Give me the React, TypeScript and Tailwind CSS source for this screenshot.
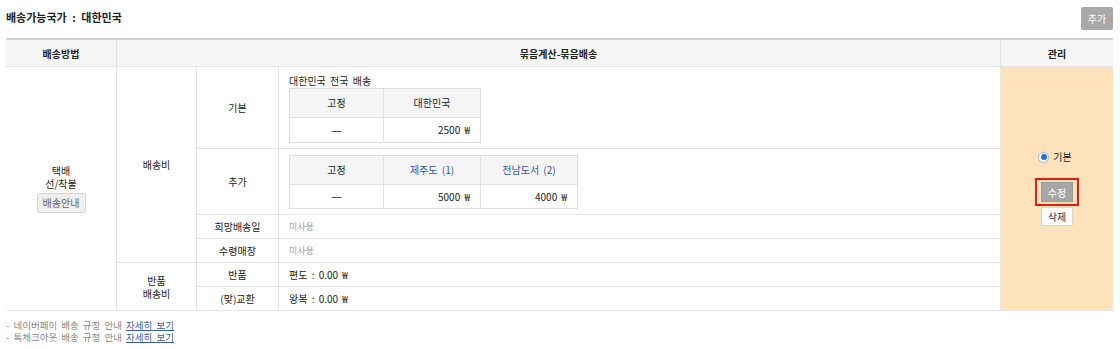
export default function App() {
  const cell = "border-r border-b border-[#e5e5e5] flex items-center justify-center";
  return (
    <div className="w-[1120px] h-[349px] bg-white font-['Noto_Sans_CJK_KR','Liberation_Sans',sans-serif] text-[10px] text-[#333] pl-[6px] pr-[7px] [word-spacing:2px]">
      <div className="h-[38px] flex items-start justify-between">
        <div className="mt-[9px] text-[11px] font-bold text-[#222] leading-[16px] [word-spacing:3px]">배송가능국가 : 대한민국</div>
        <button className="mt-[7px] w-[32px] h-[23px] bg-[#a9a9a9] text-white text-[10px] rounded-[2px]">추가</button>
      </div>

      <div className="grid grid-cols-[111px_80px_82px_722px_112px] grid-rows-[27px_82px_66px_24px_24px_24px_24px] border-t-2 border-[#d2d2d2]">
        {/* header */}
        <div className={`${cell} bg-[#f6f6f6] font-bold text-[#222]`}>배송방법</div>
        <div className={`${cell} col-span-3 bg-[#f6f6f6] font-bold text-[#222]`}>묶음계산-묶음배송</div>
        <div className="border-b border-[#e5e5e5] flex items-center justify-center bg-[#f6f6f6] font-bold text-[#222]">관리</div>

        {/* col1 */}
        <div className={`${cell} flex-col`} style={{ gridColumn: 1, gridRow: "2 / span 6" }}>
          <div className="leading-[12px] text-[#222]">택배</div>
          <div className="leading-[13px] text-[#222]">선/착불</div>
          <button className="mt-[3px] w-[49px] h-[20px] bg-[#efefef] border border-[#d6d6d6] rounded-[2px] text-[#666] text-[10px]">배송안내</button>
        </div>

        {/* col2 */}
        <div className={`${cell} text-[#222]`} style={{ gridColumn: 2, gridRow: "2 / span 4" }}>배송비</div>
        <div className={`${cell} flex-col leading-[13px] text-[#222]`} style={{ gridColumn: 2, gridRow: "6 / span 2" }}>
          <div>반품</div>
          <div>배송비</div>
        </div>

        {/* col3 labels */}
        <div className={`${cell} text-[#222]`} style={{ gridColumn: 3, gridRow: 2 }}>기본</div>
        <div className={`${cell} text-[#222]`} style={{ gridColumn: 3, gridRow: 3 }}>추가</div>
        <div className={`${cell} text-[#222]`} style={{ gridColumn: 3, gridRow: 4 }}>희망배송일</div>
        <div className={`${cell} text-[#222]`} style={{ gridColumn: 3, gridRow: 5 }}>수령매장</div>
        <div className={`${cell} text-[#222]`} style={{ gridColumn: 3, gridRow: 6 }}>반품</div>
        <div className={`${cell} text-[#222]`} style={{ gridColumn: 3, gridRow: 7 }}>(맞)교환</div>

        {/* col4 content */}
        <div className="border-r border-b border-[#e5e5e5] flex flex-col justify-center pl-[10px]" style={{ gridColumn: 4, gridRow: 2 }}>
          <div className="leading-[15px] text-[#222]">대한민국 전국 배송</div>
          <div className="w-[192px] border border-[#dcdcdc] grid grid-cols-[94px_96px] grid-rows-[29px_24px]">
            <div className="bg-[#f5f5f5] border-r border-b border-[#e2e2e2] flex items-center justify-center text-[#222]">고정</div>
            <div className="bg-[#f5f5f5] border-b border-[#e2e2e2] flex items-center justify-center text-[#222]">대한민국</div>
            <div className="border-r border-[#e2e2e2] flex items-center justify-center text-[12px] text-[#222]">—</div>
            <div className="flex items-center justify-end pr-[10px] text-[#222]">2500 ₩</div>
          </div>
        </div>
        <div className="border-r border-b border-[#e5e5e5] flex flex-col justify-center pl-[10px]" style={{ gridColumn: 4, gridRow: 3 }}>
          <div className="w-[289px] border border-[#dcdcdc] grid grid-cols-[94px_97px_96px] grid-rows-[29px_23px]">
            <div className="bg-[#f5f5f5] border-r border-b border-[#e2e2e2] flex items-center justify-center text-[#222]">고정</div>
            <div className="bg-[#f5f5f5] border-r border-b border-[#e2e2e2] flex items-center justify-center text-[#2b5aa0]">제주도 (1)</div>
            <div className="bg-[#f5f5f5] border-b border-[#e2e2e2] flex items-center justify-center text-[#2b5aa0]">전남도서 (2)</div>
            <div className="border-r border-[#e2e2e2] flex items-center justify-center text-[12px] text-[#222]">—</div>
            <div className="border-r border-[#e2e2e2] flex items-center justify-end pr-[10px] text-[#222]">5000 ₩</div>
            <div className="flex items-center justify-end pr-[10px] text-[#222]">4000 ₩</div>
          </div>
        </div>
        <div className="border-r border-b border-[#e5e5e5] flex items-center pl-[10px] text-[9px] text-[#999]" style={{ gridColumn: 4, gridRow: 4 }}>미사용</div>
        <div className="border-r border-b border-[#e5e5e5] flex items-center pl-[10px] text-[9px] text-[#999]" style={{ gridColumn: 4, gridRow: 5 }}>미사용</div>
        <div className="border-r border-b border-[#e5e5e5] flex items-center pl-[10px] text-[#222]" style={{ gridColumn: 4, gridRow: 6 }}>편도 : 0.00 ₩</div>
        <div className="border-r border-b border-[#e5e5e5] flex items-center pl-[10px] text-[#222]" style={{ gridColumn: 4, gridRow: 7 }}>왕복 : 0.00 ₩</div>

        {/* col5 */}
        <div className="border-b border-[#e5e5e5] bg-[#fee2bb] flex flex-col items-center justify-center" style={{ gridColumn: 5, gridRow: "2 / span 6" }}>
          <div className="flex items-center gap-[4px] leading-[12px] mr-[4px]">
            <span className="w-[11px] h-[11px] rounded-full bg-white border border-[#9bb3d6] flex items-center justify-center">
              <span className="w-[6px] h-[6px] rounded-full bg-[#1f6fe0]"></span>
            </span>
            <span className="text-[#222]">기본</span>
          </div>
          <div className="mt-[15px] border-2 border-[#e01e1e] px-[4px] py-[2px]">
            <button className="w-[32px] h-[20px] bg-[#a6a6a6] border border-[#999] text-white text-[10px]">수정</button>
          </div>
          <button className="w-[32px] h-[19px] mt-[1px] bg-white border border-[#d6d6d6] text-[#333] text-[10px]">삭제</button>
        </div>
      </div>

      <div className="mt-[8px] text-[9.5px] text-[#888]">
        <div className="h-[12px] leading-[12px] overflow-visible">- 네이버페이 배송 규정 안내 <a className="text-[#3a5f99] underline">자세히 보기</a></div>
        <div className="h-[12px] leading-[12px] overflow-visible">- 톡체크아웃 배송 규정 안내 <a className="text-[#3a5f99] underline">자세히 보기</a></div>
      </div>
    </div>
  );
}
